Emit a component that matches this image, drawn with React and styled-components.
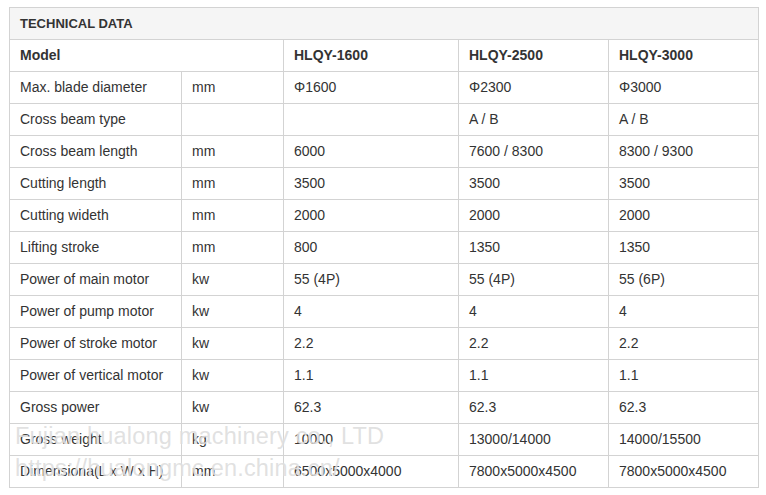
import React from "react";
import styled, { createGlobalStyle } from "styled-components";

const GlobalStyle = createGlobalStyle`
	html, body {
		margin: 0;
		padding: 0;
		background: #fff;
	}
	body {
		font-family: "Liberation Sans", Arial, sans-serif;
		color: #333;
	}
`;

const Page = styled.div`
	position: relative;
	padding: 7px 0 0 9px;
	width: 766px;
	height: 495px;
	box-sizing: border-box;
`;

const Table = styled.table`
	border-collapse: collapse;
	table-layout: fixed;
	width: 750px;
	font-size: 14px;
	color: #333;
`;

const Col = styled.col`
	width: ${(props) => props.w}px;
`;

const Cell = styled.td`
	height: 30px;
	padding: 0 10px 1px 10px;
	border: 1px solid #d3d3d3;
	vertical-align: middle;
	white-space: nowrap;
	font-weight: ${(props) => (props.bold ? "bold" : "normal")};
	background: ${(props) => (props.shade ? "#f5f5f5" : "transparent")};
	font-size: ${(props) => (props.small ? "13px" : "14px")};
`;

const Watermark = styled.div`
	position: absolute;
	left: 15px;
	top: ${(props) => props.top}px;
	font-size: 23.5px;
	letter-spacing: 0.2px;
	color: rgba(195, 195, 195, 0.5);
	text-shadow: 0 0 1px rgba(255, 255, 255, 0.9);
	pointer-events: none;
	white-space: nowrap;
`;

const rows = [
	["Max. blade diameter", "mm", "Φ1600", "Φ2300", "Φ3000"],
	["Cross beam type", "", "", "A / B", "A / B"],
	["Cross beam length", "mm", "6000", "7600 / 8300", "8300 / 9300"],
	["Cutting length", "mm", "3500", "3500", "3500"],
	["Cutting wideth", "mm", "2000", "2000", "2000"],
	["Lifting stroke", "mm", "800", "1350", "1350"],
	["Power of main motor", "kw", "55 (4P)", "55 (4P)", "55 (6P)"],
	["Power of pump motor", "kw", "4", "4", "4"],
	["Power of stroke motor", "kw", "2.2", "2.2", "2.2"],
	["Power of vertical motor", "kw", "1.1", "1.1", "1.1"],
	["Gross power", "kw", "62.3", "62.3", "62.3"],
	["Gross weight", "kg", "10000", "13000/14000", "14000/15500"],
	["Dimensiona(L x W x H)", "mm", "6500x5000x4000", "7800x5000x4500", "7800x5000x4500"],
];

export default function App() {
	return (
		<Page>
			<GlobalStyle />
			<Table>
				<colgroup>
					<Col w={172} />
					<Col w={102} />
					<Col w={175} />
					<Col w={150} />
					<Col w={150} />
				</colgroup>
				<tbody>
					<tr>
						<Cell colSpan={5} bold shade small>
							TECHNICAL DATA
						</Cell>
					</tr>
					<tr>
						<Cell colSpan={2} bold>
							Model
						</Cell>
						<Cell bold>HLQY-1600</Cell>
						<Cell bold>HLQY-2500</Cell>
						<Cell bold>HLQY-3000</Cell>
					</tr>
					{rows.map((r, i) => (
						<tr key={i}>
							{r.map((c, j) => (
								<Cell key={j}>{c}</Cell>
							))}
						</tr>
					))}
				</tbody>
			</Table>
			<Watermark top={423}>Fujian hualong machinery co., LTD</Watermark>
			<Watermark top={455}>https://hualongmc.en.china.cn/</Watermark>
		</Page>
	);
}
